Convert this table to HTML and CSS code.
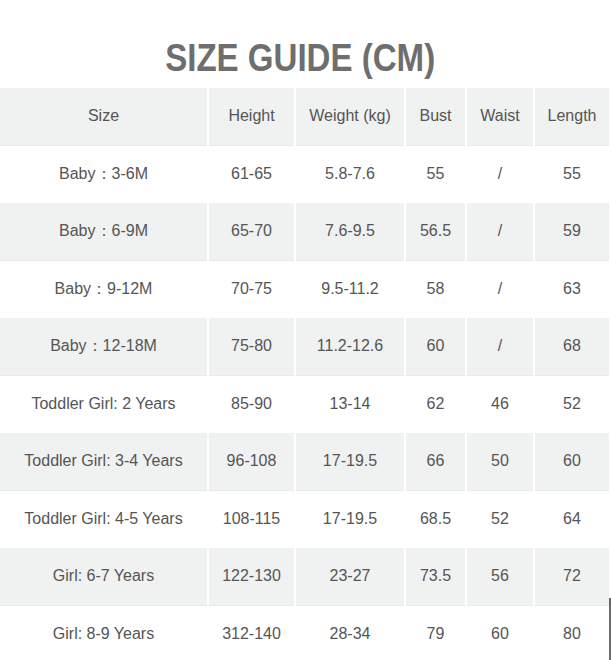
FILE: index.html
```html
<!DOCTYPE html>
<html>
<head>
<meta charset="utf-8">
<link rel="stylesheet" href="styles.css">
</head>
<body>
<div class="page">
  <header class="head"><h1 class="title">SIZE GUIDE (CM)</h1></header>
  <div class="table">
    <div class="row gray"><div class="c">Size</div><div class="c">Height</div><div class="c">Weight (kg)</div><div class="c">Bust</div><div class="c">Waist</div><div class="c">Length</div></div>
    <div class="row"><div class="c">Baby：3-6M</div><div class="c">61-65</div><div class="c">5.8-7.6</div><div class="c">55</div><div class="c">/</div><div class="c">55</div></div>
    <div class="row gray"><div class="c">Baby：6-9M</div><div class="c">65-70</div><div class="c">7.6-9.5</div><div class="c">56.5</div><div class="c">/</div><div class="c">59</div></div>
    <div class="row"><div class="c">Baby：9-12M</div><div class="c">70-75</div><div class="c">9.5-11.2</div><div class="c">58</div><div class="c">/</div><div class="c">63</div></div>
    <div class="row gray"><div class="c">Baby：12-18M</div><div class="c">75-80</div><div class="c">11.2-12.6</div><div class="c">60</div><div class="c">/</div><div class="c">68</div></div>
    <div class="row"><div class="c">Toddler Girl: 2 Years</div><div class="c">85-90</div><div class="c">13-14</div><div class="c">62</div><div class="c">46</div><div class="c">52</div></div>
    <div class="row gray"><div class="c">Toddler Girl: 3-4 Years</div><div class="c">96-108</div><div class="c">17-19.5</div><div class="c">66</div><div class="c">50</div><div class="c">60</div></div>
    <div class="row"><div class="c">Toddler Girl: 4-5 Years</div><div class="c">108-115</div><div class="c">17-19.5</div><div class="c">68.5</div><div class="c">52</div><div class="c">64</div></div>
    <div class="row gray"><div class="c">Girl: 6-7 Years</div><div class="c">122-130</div><div class="c">23-27</div><div class="c">73.5</div><div class="c">56</div><div class="c">72</div></div>
    <div class="row last"><div class="c">Girl: 8-9 Years</div><div class="c">312-140</div><div class="c">28-34</div><div class="c">79</div><div class="c">60</div><div class="c">80</div></div>
  </div>
</div>
</body>
</html>
```
FILE: styles.css
```css
html, body {
  margin: 0;
  padding: 0;
  background: #ffffff;
}
body {
  font-family: "Liberation Sans", Arial, sans-serif;
  color: #555555;
  overflow: hidden;
}
.page {
  width: 611px;
}
.head {
  height: 88px;
  width: 600px;
  display: flex;
  justify-content: center;
  align-items: flex-start;
}
.title {
  margin: 0;
  padding-top: 38px;
  font-size: 38px;
  line-height: 40px;
  font-weight: bold;
  color: #6e6e6e;
  transform: scaleX(0.87);
  white-space: nowrap;
}
.table {
  display: flex;
  flex-direction: column;
}
.row {
  display: grid;
  grid-template-columns: 207px 85px 108px 59px 66px 74px;
  column-gap: 2px;
  height: 57.5px;
}
.last {
  position: relative;
}
.last::after {
  content: "";
  position: absolute;
  top: -8px;
  bottom: 0;
  left: 609px;
  width: 2px;
  background: #6a6a6a;
}
.c {
  display: flex;
  align-items: center;
  justify-content: center;
  font-size: 16px;
  white-space: nowrap;
}
.gray .c {
  background: #f0f1f1;
  border-bottom: 1px solid #e8e9e9;
}
```
